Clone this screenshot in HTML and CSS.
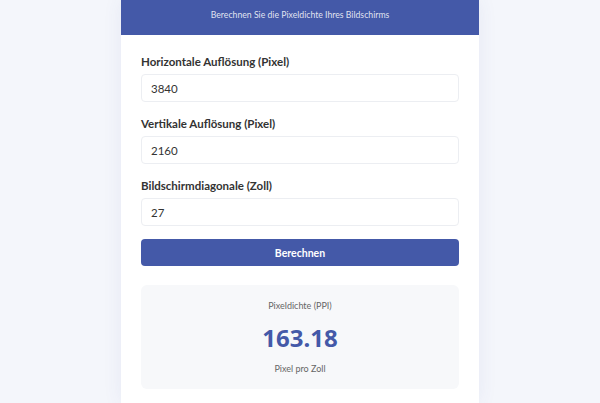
FILE: index.html
```html
<!DOCTYPE html>
<html lang="de">
<head>
	<meta charset="UTF-8">
	<title>PPI Rechner</title>
	<link rel="stylesheet" href="styles.css">
</head>
<body>
	<div class="card">
		<div class="card-head">
			<p>Berechnen Sie die Pixeldichte Ihres Bildschirms</p>
		</div>
		<div class="card-body">
			<div class="field">
				<label for="w">Horizontale Auflösung (Pixel)</label>
				<input type="text" id="w" value="3840">
			</div>
			<div class="field">
				<label for="h">Vertikale Auflösung (Pixel)</label>
				<input type="text" id="h" value="2160">
			</div>
			<div class="field">
				<label for="d">Bildschirmdiagonale (Zoll)</label>
				<input type="text" id="d" value="27">
			</div>
			<button class="btn">Berechnen</button>
			<div class="result">
				<div class="result-label">Pixeldichte (PPI)</div>
				<div class="result-value">163.18</div>
				<div class="result-unit">Pixel pro Zoll</div>
			</div>
		</div>
	</div>
</body>
</html>
```

FILE: styles.css
```css
*{
	margin: 0;
	padding: 0;
	box-sizing: border-box;
}
body{
	background: #f4f6fb;
	font-family: Lato, "Noto Sans", sans-serif;
	color: #333;
}
.card{
	width: 358px;
	margin: 0 auto;
	background: #fff;
	box-shadow: 0 0 18px rgba(60, 80, 160, 0.08);
}
.card-head{
	background: #4459a8;
	color: rgba(255, 255, 255, 0.85);
	text-align: center;
	padding: 8px 20px 13px;
}
.card-head p{
	font-size: 8.7px;
	line-height: 14px;
}
.card-body{
	padding: 20px 20px 14px;
}
.field{
	display: flex;
	flex-direction: column;
	gap: 5px;
	margin-bottom: 15px;
}
.field label{
	font-size: 11.5px;
	line-height: 14px;
	font-weight: 700;
	color: #333;
}
.field input{
	height: 28px;
	border: 1px solid #eceef2;
	border-radius: 4px;
	padding: 0 9px;
	font: inherit;
	font-size: 11.5px;
	color: #333;
	outline: none;
}
.btn{
	display: block;
	width: 100%;
	height: 27px;
	border: none;
	border-radius: 4px;
	background: #4459a8;
	color: #fff;
	font: inherit;
	font-size: 10.5px;
	font-weight: 700;
	margin-top: -2px;
}
.result{
	margin-top: 19px;
	background: #f7f8fa;
	border-radius: 6px;
	height: 104px;
	display: flex;
	flex-direction: column;
	align-items: center;
	padding-top: 14px;
}
.result-label{
	font-size: 9px;
	line-height: 14px;
	color: #666;
}
.result-value{
	font-family: "Noto Sans", sans-serif;
	font-size: 24px;
	line-height: 32px;
	font-weight: 700;
	color: #4459a8;
	margin-top: 9px;
}
.result-unit{
	font-size: 9px;
	line-height: 14px;
	color: #666;
	margin-top: 8px;
}
```
